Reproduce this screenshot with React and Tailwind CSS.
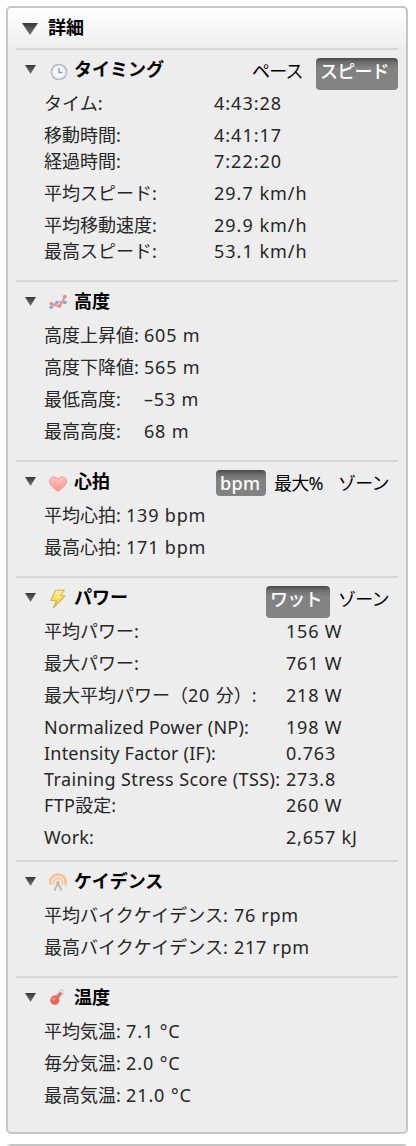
import { useState } from 'react';

const sections = [
  {
    id: 'timing',
    title: 'タイミング',
    Icon: ClockIcon,
    iconClass: 'ml-3.5 mr-1.5 mt-3',
    tabs: [
      { name: 'ペース', size: 'h-8 w-[64px]' },
      { name: 'スピード', size: 'h-8 w-[82px]' },
    ],
    active: 'スピード',
    labelWidth: 'w-[170px]',
    valueClass: 'tracking-[1px]',
    bottom: 'pb-4',
    rows: [
      { label: 'タイム:', value: '4:43:28' },
      { label: '移動時間:', value: '4:41:17' },
      { label: '経過時間:', value: '7:22:20', tight: true },
      { label: '平均スピード:', value: '29.7 km/h' },
      { label: '平均移動速度:', value: '29.9 km/h' },
      { label: '最高スピード:', value: '53.1 km/h', tight: true },
    ],
  },
  {
    id: 'elevation',
    title: '高度',
    Icon: ChartIcon,
    iconClass: 'ml-[13px] mr-[7px] mt-[10px]',
    labelWidth: 'w-[100px]',
    valueClass: 'tracking-[0.8px]',
    bottom: 'pb-4',
    rows: [
      { label: '高度上昇値:', value: '605 m' },
      { label: '高度下降値:', value: '565 m' },
      { label: '最低高度:', value: '–53 m' },
      { label: '最高高度:', value: '68 m' },
    ],
  },
  {
    id: 'heart',
    title: '心拍',
    Icon: HeartIcon,
    iconClass: 'ml-[13px] mr-[7px] mt-3',
    tabs: [
      { name: 'bpm', size: 'h-[26px] w-[50px]' },
      { name: '最大%', size: 'h-8 w-[60px]' },
      { name: 'ゾーン', size: 'h-8 w-[64px]' },
    ],
    active: 'bpm',
    labelWidth: 'w-[82px]',
    valueClass: 'tracking-[0.8px]',
    bottom: 'pb-4',
    rows: [
      { label: '平均心拍:', value: '139 bpm' },
      { label: '最高心拍:', value: '171 bpm' },
    ],
  },
  {
    id: 'power',
    title: 'パワー',
    Icon: BoltIcon,
    iconClass: 'ml-[13px] mr-[7px] mt-[11px]',
    tabs: [
      { name: 'ワット', size: 'h-8 w-[64px]' },
      { name: 'ゾーン', size: 'h-8 w-[64px]' },
    ],
    active: 'ワット',
    labelWidth: 'w-[242px]',
    valueClass: 'tracking-[0.8px]',
    bottom: 'pb-2.5',
    rows: [
      { label: '平均パワー:', value: '156 W' },
      { label: '最大パワー:', value: '761 W' },
      { label: '最大平均パワー（20 分）:', value: '218 W' },
      { label: 'Normalized Power (NP):', value: '198 W', spacing: 'tracking-[0.2px]' },
      { label: 'Intensity Factor (IF):', value: '0.763', tight: true, spacing: 'tracking-[0.2px]' },
      { label: 'Training Stress Score (TSS):', value: '273.8', tight: true, spacing: 'tracking-[0.38px]' },
      { label: 'FTP設定:', value: '260 W', tight: true, spacing: 'tracking-[0.3px]' },
      { label: 'Work:', value: '2,657 kJ', spacing: 'tracking-[0.2px]' },
    ],
  },
  {
    id: 'cadence',
    title: 'ケイデンス',
    Icon: CadenceIcon,
    iconClass: 'ml-[13px] mr-[7px] mt-[10px]',
    labelWidth: 'w-[190px]',
    valueClass: 'tracking-[0.7px]',
    bottom: 'pb-4',
    rows: [
      { label: '平均バイクケイデンス:', value: '76 rpm' },
      { label: '最高バイクケイデンス:', value: '217 rpm' },
    ],
  },
  {
    id: 'temperature',
    title: '温度',
    Icon: ThermometerIcon,
    iconClass: 'ml-[13px] mr-[7px] mt-[9px]',
    labelWidth: 'w-[82px]',
    valueClass: 'tracking-[0.9px]',
    bottom: 'pb-6',
    rows: [
      { label: '平均気温:', value: '7.1 °C' },
      { label: '毎分気温:', value: '2.0 °C' },
      { label: '最高気温:', value: '21.0 °C' },
    ],
  },
];

function ClockIcon() {
  return (
    <svg width="18" height="18" viewBox="0 0 18 18">
      <circle cx="9" cy="9" r="7.6" fill="#f7fafc" stroke="#b4b9bf" strokeWidth="1.5" />
      <circle cx="9" cy="9" r="6" fill="none" stroke="#dfe6ee" strokeWidth="1" />
      <path d="M9 5v4.500h3.500" fill="none" stroke="#8797aa" strokeWidth="1.4" />
    </svg>
  );
}

function ChartIcon() {
  return (
    <svg width="18" height="18" viewBox="0 0 18 18">
      <path d="M2 14.500L8.500 9L16 9.500" fill="none" stroke="#a5b6de" strokeWidth="1.700" />
      <path d="M2 10.500L10.500 13.500L16 3.500" fill="none" stroke="#ec9490" strokeWidth="2" />
      <g fill="#8ea6d8">
        <circle cx="2.200" cy="14.200" r="1.800" />
        <circle cx="8" cy="9.300" r="1.700" />
        <circle cx="15.800" cy="9.300" r="1.900" />
      </g>
      <g fill="#ea8f8b">
        <circle cx="2.200" cy="10.500" r="1.800" />
        <circle cx="10.500" cy="13" r="2" />
        <circle cx="15.800" cy="3.700" r="2" />
      </g>
    </svg>
  );
}

function HeartIcon() {
  return (
    <svg width="18" height="18" viewBox="0 0 18 18">
      <defs>
        <linearGradient id="heart" x1="0" y1="0" x2="0" y2="1">
          <stop offset="0" stopColor="#ffc4c2" />
          <stop offset="1" stopColor="#f88f8f" />
        </linearGradient>
      </defs>
      <path
        d="M9 16.300C6 14 .8 10.800 .6 6.600C.5 3.700 2.500 2 4.800 2C6.700 2 8.200 2.900 9 4.400C9.800 2.900 11.300 2 13.200 2C15.500 2 17.500 3.700 17.400 6.600C17.200 10.800 12 14 9 16.300Z"
        fill="url(#heart)"
        stroke="#eb9695"
        strokeWidth="1"
      />
    </svg>
  );
}

function BoltIcon() {
  return (
    <svg width="18" height="20" viewBox="0 0 18 20">
      <defs>
        <linearGradient id="bolt" x1="0" y1="0" x2="0" y2="1">
          <stop offset="0" stopColor="#fff3a0" />
          <stop offset="1" stopColor="#f7c83c" />
        </linearGradient>
      </defs>
      <path
        d="M6.500 1.500L15.500 1L11.500 6.500L16 7L4.500 18.500L7.500 11.500L1.800 11.500Z"
        fill="url(#bolt)"
        stroke="#d9b04a"
        strokeWidth="1.1"
        strokeLinejoin="round"
      />
    </svg>
  );
}

function CadenceIcon() {
  return (
    <svg width="18" height="18" viewBox="0 0 18 18">
      <g fill="none">
        <path d="M2 12A7.600 7.600 0 1 1 16 12" stroke="#f8bf97" strokeWidth="2.600" />
        <path d="M5 11.500A4.400 4.400 0 1 1 13 11.500" stroke="#f9c6a2" strokeWidth="1.900" />
        <path d="M9 10L5.500 17.500M9 10L12.500 17.500" stroke="#b3b7bc" strokeWidth="1.800" />
      </g>
      <circle cx="9" cy="9.300" r="1.600" fill="#f2a877" />
    </svg>
  );
}

function ThermometerIcon() {
  return (
    <svg width="18" height="18" viewBox="0 0 18 18">
      <path d="M6 11.500L12.800 4" stroke="#c9cbce" strokeWidth="5.400" strokeLinecap="round" />
      <path d="M6 11.500L12.800 4" stroke="#ececee" strokeWidth="3.200" strokeLinecap="round" />
      <path d="M6 11.500L11.500 5.500" stroke="#e2695c" strokeWidth="2.600" strokeLinecap="round" />
      <circle cx="5.800" cy="12.200" r="4.600" fill="#e5685c" />
      <circle cx="4.700" cy="11" r="1.600" fill="#f0968c" />
    </svg>
  );
}

function Arrow({ className }) {
  return (
    <svg className={className} viewBox="0 0 16 12" preserveAspectRatio="none">
      <defs>
        <linearGradient id="arrow" x1="0" y1="0" x2="0" y2="1">
          <stop offset="0" stopColor="#383838" />
          <stop offset="1" stopColor="#777" />
        </linearGradient>
      </defs>
      <path d="M0 0H16L8 12Z" fill="url(#arrow)" />
    </svg>
  );
}

// Only the Latin runs of a label are letter-spaced
function Label({ text, spacing = 'tracking-[0.8px]' }) {
  return text.split(/([\x20-\x7e]+)/).map((part, i) => (
    <span key={i} className={i % 2 ? spacing : ''}>{part}</span>
  ));
}

function Section({ section }) {
  const { title, Icon, iconClass, tabs = [], labelWidth, valueClass, bottom, rows } = section;
  const [active, setActive] = useState(section.active);

  return (
    <section className={`border-t-2 border-[#d5d5d5] ${bottom}`}>
      <div className="flex h-[34px] items-start">
        <Arrow className="ml-[9px] mt-[15px] h-[9px] w-[11px]" />
        <span className={`flex h-5 w-[18px] items-center ${iconClass}`}>
          <Icon />
        </span>
        <h3 className="mt-[6px] font-bold leading-[26px] text-black">{title}</h3>
        <div className="ml-auto mt-2 flex items-start gap-1">
          {tabs.map(tab => (
            <button
              key={tab.name}
              onClick={() => setActive(tab.name)}
              className={`flex items-start rounded-[4px] pl-1 leading-[26px] whitespace-nowrap ${tab.size} ${
                tab.name === 'bpm' ? 'tracking-[0.4px]' : 'tracking-[-0.8px]'
              } ${
                tab.name === active
                  ? 'bg-[linear-gradient(to_bottom,#484848,#6b6b6b_4px,#828282_10px,#828282)] font-medium text-white'
                  : 'text-black'
              }`}
            >
              {tab.name}
            </button>
          ))}
        </div>
      </div>
      <dl className="pl-7 text-[#262626]">
        {rows.map(row => (
          <div key={row.label} className={`flex items-end leading-[26px] whitespace-nowrap ${row.tight ? 'h-[26px]' : 'h-8'}`}>
            <dt className={`shrink-0 ${labelWidth}`}>
              <Label text={row.label} spacing={row.spacing} />
            </dt>
            <dd className={valueClass}>{row.value}</dd>
          </div>
        ))}
      </dl>
    </section>
  );
}

export default function App() {
  return (
    <div className="h-[1146px] overflow-hidden bg-white pl-1.5 pt-1.5 font-['Noto_Sans','Noto_Sans_CJK_JP',sans-serif] text-[18px]">
      <div className="h-[1128px] w-[402px] rounded-[5px] border-2 border-[#c6c6c6] bg-[#ededed] bg-[linear-gradient(to_bottom,#ffffff,#ededed_42px)] px-2">
        <div className="flex h-10 items-start">
          <Arrow className="ml-[6px] mt-[15px] h-3 w-4" />
          <h2 className="ml-[10px] mt-[6px] font-bold leading-[26px] text-black">詳細</h2>
        </div>
        {sections.map(section => (
          <Section key={section.id} section={section} />
        ))}
      </div>
      <div className="mt-2.5 h-10 w-[402px] rounded-[5px] border-2 border-[#c6c6c6] bg-white" />
    </div>
  );
}
